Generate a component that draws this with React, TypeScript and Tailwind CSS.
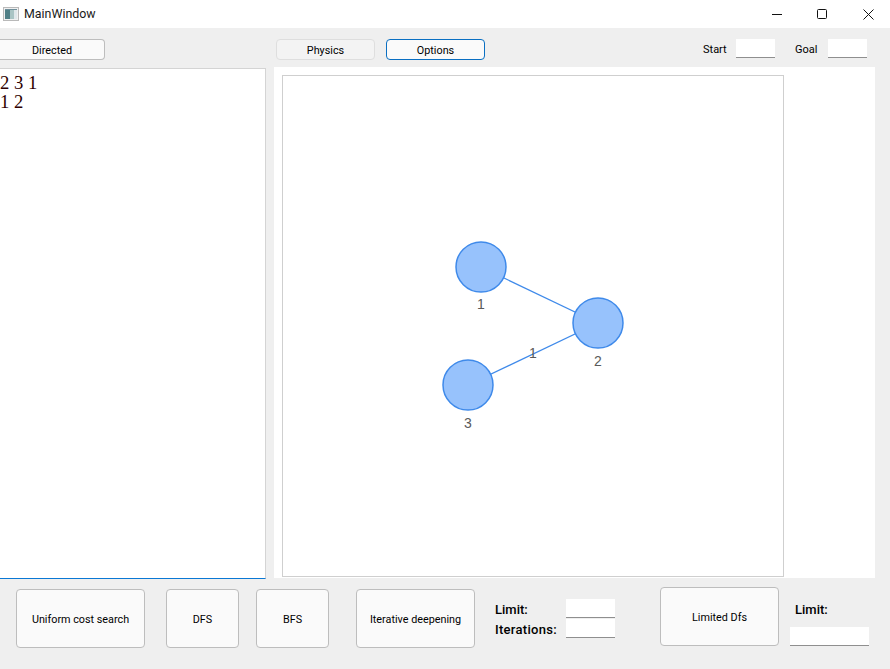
const ui = "font-['Roboto',sans-serif]";

function Btn({ label, className, tone = "border-[#bdbdbd] bg-[#fafafa]" }: { label: string; className: string; tone?: string }) {
  return (
    <button className={`shrink-0 rounded-[4px] border text-[10.8px] text-black ${tone} ${ui} ${className}`}>
      {label}
    </button>
  );
}

function Field({ className }: { className: string }) {
  return <div className={`shrink-0 border-b border-[#8f8f8f] bg-white ${className}`} />;
}

function Graph() {
  const nodes = [
    { id: "1", x: 198, y: 191, ly: 233 },
    { id: "2", x: 315, y: 247, ly: 290 },
    { id: "3", x: 185, y: 309, ly: 352 },
  ];
  return (
    <svg width="500" height="500" className="block">
      <line x1="198" y1="191" x2="315" y2="247" stroke="#3f8aea" strokeWidth="1.3" />
      <line x1="315" y1="247" x2="185" y2="309" stroke="#3f8aea" strokeWidth="1.3" />
      {nodes.map((n) => (
        <g key={n.id}>
          <circle cx={n.x} cy={n.y} r="25" fill="#97c2fc" stroke="#3f8aea" strokeWidth="1.5" />
          <text x={n.x} y={n.ly} textAnchor="middle" fontSize="14" fill="#5a5a5a" fontFamily="Liberation Sans, sans-serif">
            {n.id}
          </text>
        </g>
      ))}
      <text x="250" y="282" textAnchor="middle" fontSize="14" fill="#5a5a5a" fontFamily="Liberation Sans, sans-serif">
        1
      </text>
    </svg>
  );
}

export default function App() {
  return (
    <div className={`flex h-[669px] w-[890px] flex-col overflow-hidden bg-[#efefef] ${ui}`}>
      {/* title bar */}
      <div className="flex h-[28px] shrink-0 items-center bg-white">
        <svg width="16" height="14" viewBox="0 0 16 14" className="ml-[3px]">
          <rect x="0.5" y="0.5" width="15" height="13" fill="#f0f0f0" stroke="#b9b9b9" />
          <rect x="2" y="3" width="5" height="9" fill="#4f7f86" />
          <rect x="7" y="3" width="4" height="9" fill="#a9c4c4" />
          <rect x="11" y="3" width="3" height="9" fill="#dfe7ea" />
          <rect x="2" y="2" width="12" height="1" fill="#6f8f9b" />
        </svg>
        <span className="ml-[5px] w-[72px] text-[12.4px] text-[#1a1a1a]">MainWindow</span>
        <svg width="10" height="1" className="ml-[676px]">
          <rect width="10" height="1" fill="#111" />
        </svg>
        <svg width="10" height="10" className="ml-[35px]">
          <rect x="0.5" y="0.5" width="9" height="9" rx="1" fill="none" stroke="#111" />
        </svg>
        <svg width="11" height="11" className="ml-[36px]">
          <path d="M0.5 0.5L10.5 10.5M10.5 0.5L0.5 10.5" stroke="#111" fill="none" />
        </svg>
      </div>

      {/* toolbar */}
      <div className="flex h-[39px] shrink-0 items-start pt-[11px]">
        <Btn label="Directed" className="h-[21px] w-[105px] rounded-l-none border-l-0 pt-[3px]" />
        <Btn label="Physics" tone="border-[#dedede] bg-[#f3f3f3]" className="ml-[171px] h-[21px] w-[99px] pt-[3px]" />
        <Btn label="Options" tone="border-[#0a6fc2] bg-[#fafafa]" className="ml-[11px] h-[21px] w-[99px] pt-[3px]" />
        <span className="ml-[218px] mt-px w-[25px] text-[11px] leading-[19px] text-black">Start</span>
        <Field className="ml-[8px] h-[19px] w-[39px]" />
        <span className="ml-[20px] mt-px w-[24px] text-[11px] leading-[19px] text-black">Goal</span>
        <Field className="ml-[9px] h-[19px] w-[39px]" />
      </div>

      {/* editor and graph */}
      <div className="flex h-[511px] shrink-0">
        <div className="mt-px h-full w-[266px] border-b border-r border-t border-b-[#0a78d4] border-r-[#d4d4d4] border-t-[#d4d4d4] bg-white pt-[5px] font-['Liberation_Serif',serif] text-[18.67px] leading-[18px] text-[#2e0000]">
          <div>2 3 1</div>
          <div className="mt-px">1 2</div>
        </div>
        <div className="ml-[8px] h-full w-[601px] bg-white pl-[8px] pt-[8px]">
          <div className="h-[502px] w-[502px] border border-[#cfcfcf]">
            <Graph />
          </div>
        </div>
      </div>

      {/* search buttons */}
      <div className="flex items-start pl-[16px] pt-[9px]">
        <Btn label="Uniform cost search" className="mt-[2px] h-[59px] w-[129px] pt-[4px]" />
        <Btn label="DFS" className="ml-[21px] mt-[2px] h-[59px] w-[73px] pt-[4px]" />
        <Btn label="BFS" className="ml-[17px] mt-[2px] h-[59px] w-[73px] pt-[4px]" />
        <Btn label="Iterative deepening" className="ml-[27px] mt-[2px] h-[59px] w-[119px] pt-[4px]" />
        <div className="ml-[20px] mt-[15px] flex w-[71px] flex-col gap-[4px] text-[13px] font-medium leading-[16px] text-black">
          <span>Limit:</span>
          <span className="tracking-[0.3px]">Iterations:</span>
        </div>
        <div className="mt-[12px] flex flex-col gap-px">
          <Field className="h-[19px] w-[49px]" />
          <Field className="h-[19px] w-[49px]" />
        </div>
        <Btn label="Limited Dfs" className="ml-[45px] h-[59px] w-[119px] pt-[4px]" />
        <div className="ml-[11px] flex flex-col">
          <span className="ml-[5px] mt-[15px] text-[13px] font-medium leading-[16px] text-black">Limit:</span>
          <Field className="mt-[9px] h-[19px] w-[79px]" />
        </div>
      </div>
    </div>
  );
}
